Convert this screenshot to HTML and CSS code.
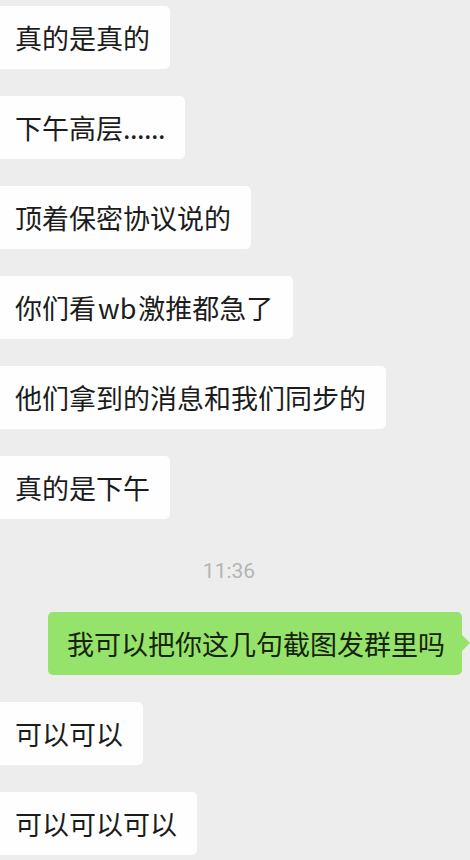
FILE: index.html
```html
<!DOCTYPE html>
<html lang="zh-CN">
<head>
    <meta charset="UTF-8">
    <meta name="viewport" content="width=device-width, initial-scale=1.0">
    <title>聊天记录</title>
    <link rel="stylesheet" href="styles.css">
</head>
<body>
    <div class="chat">
        <div class="msg">真的是真的</div>
        <div class="msg">下午高层<span class="dots">......</span></div>
        <div class="msg">顶着保密协议说的</div>
        <div class="msg">你们看<span class="latin">wb</span>激推都急了</div>
        <div class="msg">他们拿到的消息和我们同步的</div>
        <div class="msg">真的是下午</div>

        <div class="time">11:36</div>

        <div class="msg msg-self">我可以把你这几句截图发群里吗</div>

        <div class="msg">可以可以</div>
        <div class="msg">可以可以可以</div>
    </div>
</body>
</html>
```

FILE: styles.css
```css
:root {
    --fundo: #ededed;
    --verde: #95e36a;
    --texto: #1c1c1c;
}

body {
    margin: 0;
    background-color: var(--fundo);
    font-family: "Noto Sans CJK SC", "Noto Sans", sans-serif;
    color: var(--texto);
    overflow: hidden;
}

.chat {
    display: flex;
    flex-direction: column;
    align-items: flex-start;
    padding-top: 6px;
}

.msg {
    position: relative;
    height: 63px;
    line-height: 63px;
    font-size: 27px;
    padding: 0 20px 0 15px;
    margin-bottom: 27px;
    background-color: #fefefe;
    border-radius: 0 5px 5px 0;
    white-space: nowrap;
}

.dots {
    letter-spacing: -0.5px;
}

.latin {
    margin: 0 2px;
}

.time {
    align-self: stretch;
    text-align: center;
    font-family: Roboto, "Liberation Sans", sans-serif;
    font-size: 21px;
    line-height: 50px;
    color: #b4b4b4;
    padding-right: 12px;
    margin-bottom: 16px;
}

.msg-self {
    align-self: flex-end;
    margin-right: 8px;
    padding: 0 17px 0 19px;
    background-color: var(--verde);
    color: #17230f;
    border-radius: 5px;
}

/* rabinho do balão verde */
.msg-self::after {
    content: "";
    position: absolute;
    right: -8px;
    top: 23px;
    border-left: 8px solid var(--verde);
    border-top: 8px solid transparent;
    border-bottom: 8px solid transparent;
}
```
